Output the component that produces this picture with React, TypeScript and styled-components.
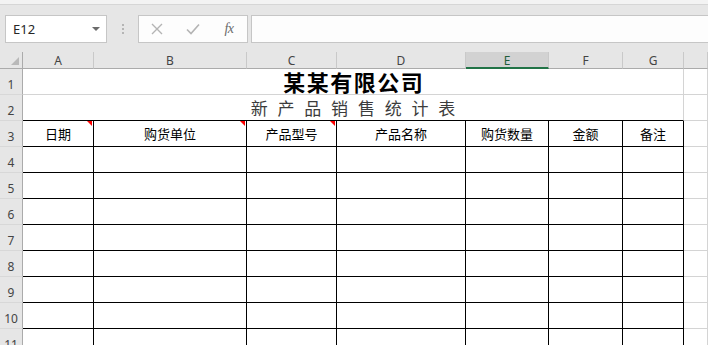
import React from 'react';
import styled, { createGlobalStyle } from 'styled-components';

const GlobalStyle = createGlobalStyle`
  html, body {
    margin: 0;
    padding: 0;
    background: #ffffff;
    overflow: hidden;
  }
  body {
    font-family: "Noto Sans", "Liberation Sans", sans-serif;
  }
`;

const Window = styled.div`
  width: 708px;
  height: 345px;
  display: flex;
  flex-direction: column;
  overflow: hidden;
`;

const TopStrip = styled.div`
  height: 4px;
  background: #f3f3f3;
  border-bottom: 1px solid #d6d6d6;
`;

const Toolbar = styled.div`
  height: 47px;
  box-sizing: border-box;
  background: #e6e6e6;
  display: flex;
  align-items: flex-start;
  padding: 10px 0 0 5px;
`;

const NameBox = styled.div`
  width: 102px;
  height: 28px;
  box-sizing: border-box;
  border: 1px solid #c6c6c6;
  background: #ffffff;
  display: flex;
  align-items: center;
  padding: 0 6px 0 7px;
  font-size: 13px;
  color: #262626;
`;

const DropArrow = styled.span`
  margin-left: auto;
  width: 0;
  height: 0;
  border-left: 4px solid transparent;
  border-right: 4px solid transparent;
  border-top: 4px solid #6b6b6b;
`;

const Grip = styled.div`
  width: 31px;
  height: 28px;
  display: flex;
  flex-direction: column;
  align-items: center;
  justify-content: center;
  gap: 2px;
`;

const GripDot = styled.span`
  width: 2px;
  height: 2px;
  background: #b5b5b5;
`;

const FxButtons = styled.div`
  width: 110px;
  height: 28px;
  box-sizing: border-box;
  border: 1px solid #c6c6c6;
  background: #fdfdfd;
  display: grid;
  grid-template-columns: repeat(3, 36px);
  align-items: center;
  justify-items: center;
`;

const FxLabel = styled.span`
  font-family: "Liberation Serif", serif;
  font-style: italic;
  font-size: 14px;
  color: #6b6b6b;
  letter-spacing: -0.5px;
`;

const FormulaInput = styled.div`
  flex: 1;
  height: 28px;
  box-sizing: border-box;
  margin-left: 3px;
  border: 1px solid #c6c6c6;
  border-right: none;
  background: #fdfdfd;
`;

const Sheet = styled.div`
  flex: 1;
  display: grid;
  grid-template-columns: 23px 71px 153px 90px 129px 83px 74px 61px 1fr;
  grid-template-rows: 17px;
  grid-auto-rows: 26px;
  overflow: hidden;
  background: #ffffff;
`;

const Corner = styled.div`
  box-sizing: border-box;
  background: #e6e6e6;
  border-right: 1px solid #ababab;
  border-bottom: 1px solid #ababab;
  display: flex;
  align-items: flex-end;
  justify-content: flex-end;
  padding: 0 3px 3px 0;
`;

const CornerMark = styled.span`
  width: 0;
  height: 0;
  border-left: 8px solid transparent;
  border-bottom: 8px solid #b9b9b9;
`;

const ColHead = styled.div<{ $active?: boolean }>`
  box-sizing: border-box;
  background: ${(p) => (p.$active ? '#d2d2d2' : '#e6e6e6')};
  border-right: 1px solid #c9c9c9;
  border-bottom: ${(p) => (p.$active ? '2px solid #217346' : '1px solid #ababab')};
  display: flex;
  align-items: center;
  justify-content: center;
  padding-top: ${(p) => (p.$active ? '1px' : '0')};
  font-size: 12px;
  color: ${(p) => (p.$active ? '#1e5e3b' : '#444444')};
`;

const RowHead = styled.div`
  box-sizing: border-box;
  background: #e6e6e6;
  border-right: 1px solid #ababab;
  border-bottom: 1px solid #d8d8d8;
  display: flex;
  align-items: flex-end;
  justify-content: center;
  padding-bottom: 2px;
  font-size: 12px;
  line-height: 14px;
  color: #444444;
`;

const Cell = styled.div<{ $boxed?: boolean; $span?: number; $edge?: boolean }>`
  position: relative;
  box-sizing: border-box;
  grid-column: span ${(p) => p.$span ?? 1};
  border-right: 1px solid ${(p) => (p.$boxed ? '#000000' : '#d4d4d4')};
  border-bottom: 1px solid ${(p) => (p.$boxed || p.$edge ? '#000000' : '#d4d4d4')};
  display: flex;
  align-items: center;
  justify-content: center;
  font-family: "Noto Sans CJK SC", "Noto Sans", sans-serif;
  font-size: 13px;
  color: #000000;
`;

const TitleCell = styled(Cell)`
  align-items: flex-end;
`;

const Title = styled.span`
  font-family: "Noto Sans CJK SC", sans-serif;
  font-weight: 700;
  font-size: 22px;
  line-height: 24px;
  letter-spacing: 1.5px;
  padding-left: 1.5px;
  margin-bottom: 1px;
`;

const Subtitle = styled.span`
  font-family: "Noto Sans CJK SC", sans-serif;
  font-size: 17px;
  line-height: 20px;
  letter-spacing: 3px;
  padding-left: 3px;
  color: #3c3c3c;
  margin-bottom: 2px;
`;

const Comment = styled.span`
  position: absolute;
  top: 0;
  right: 1px;
  width: 0;
  height: 0;
  border-left: 5px solid transparent;
  border-top: 5px solid #ff0000;
`;

const XIcon = () => (
  <svg width="12" height="12" viewBox="0 0 12 12">
    <path d="M1 1 L11 11 M11 1 L1 11" stroke="#b4b4b4" strokeWidth="1.4" fill="none" />
  </svg>
);

const CheckIcon = () => (
  <svg width="14" height="12" viewBox="0 0 14 12">
    <path d="M1 6.5 L5 10.5 L13 1.5" stroke="#b4b4b4" strokeWidth="1.6" fill="none" />
  </svg>
);

const columns = ['A', 'B', 'C', 'D', 'E', 'F', 'G', ''];
const headers = ['日期', '购货单位', '产品型号', '产品名称', '购货数量', '金额', '备注'];
const commented = [true, true, true, false, false, false, false];
const bodyRows = [4, 5, 6, 7, 8, 9, 10, 11];

export default function App() {
  return (
    <Window>
      <GlobalStyle />
      <TopStrip />
      <Toolbar>
        <NameBox>
          E12
          <DropArrow />
        </NameBox>
        <Grip>
          <GripDot />
          <GripDot />
          <GripDot />
        </Grip>
        <FxButtons>
          <XIcon />
          <CheckIcon />
          <FxLabel>fx</FxLabel>
        </FxButtons>
        <FormulaInput />
      </Toolbar>

      <Sheet>
        <Corner>
          <CornerMark />
        </Corner>
        {columns.map((c, i) => (
          <ColHead key={i} $active={c === 'E'}>
            {c}
          </ColHead>
        ))}

        <RowHead>1</RowHead>
        <TitleCell $span={7}>
          <Title>某某有限公司</Title>
        </TitleCell>
        <Cell />

        <RowHead>2</RowHead>
        <TitleCell $span={7} $edge>
          <Subtitle>新 产 品 销 售 统 计 表</Subtitle>
        </TitleCell>
        <Cell />

        <RowHead>3</RowHead>
        {headers.map((h, i) => (
          <Cell key={h} $boxed>
            {h}
            {commented[i] && <Comment />}
          </Cell>
        ))}
        <Cell />

        {bodyRows.map((r) => (
          <React.Fragment key={r}>
            <RowHead>{r}</RowHead>
            {headers.map((h) => (
              <Cell key={h} $boxed />
            ))}
            <Cell />
          </React.Fragment>
        ))}
      </Sheet>
    </Window>
  );
}
